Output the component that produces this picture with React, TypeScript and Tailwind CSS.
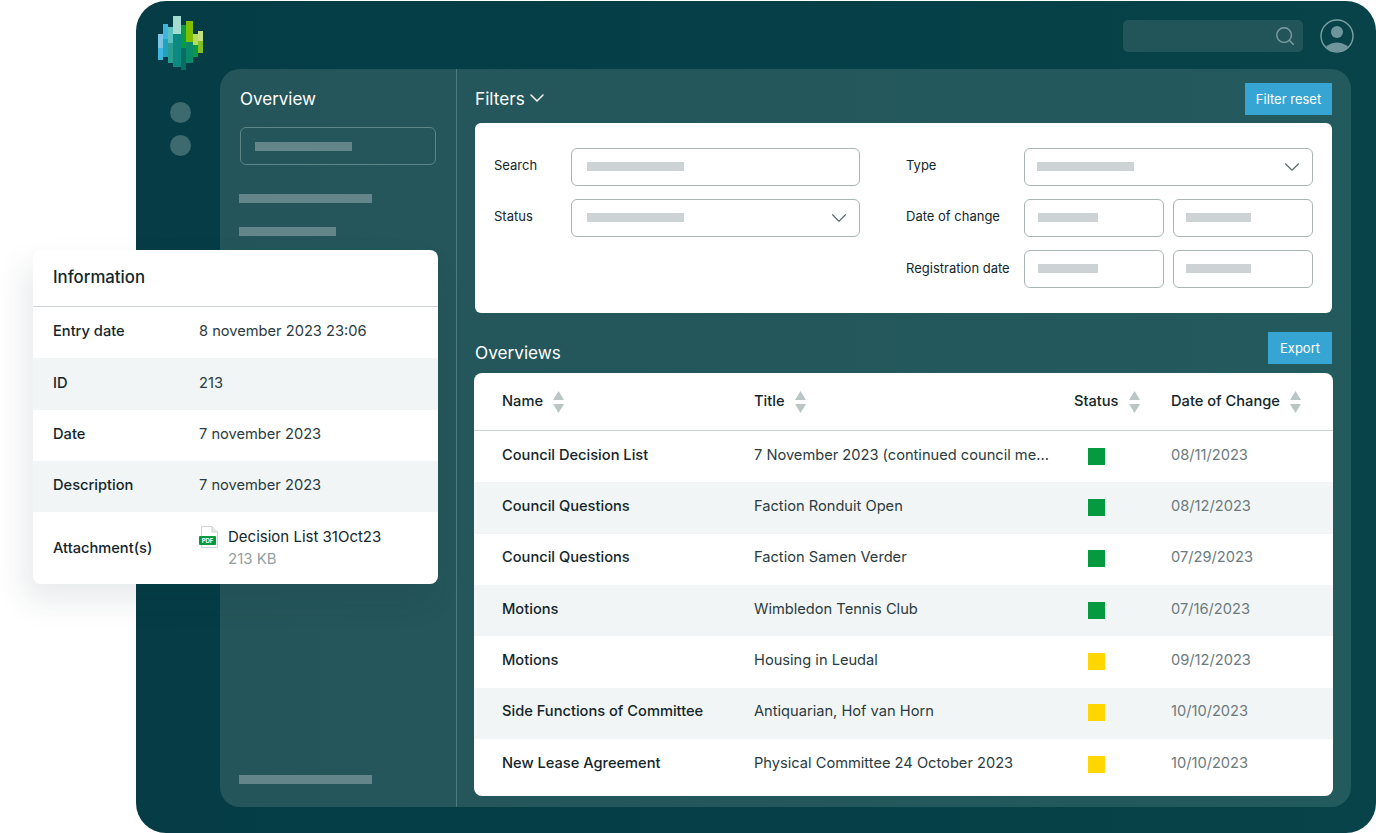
import { ChevronDown, Search } from "lucide-react";

const rows = [
  { name: "Council Decision List", title: "7 November 2023 (continued council me...", color: "bg-[#059a3f]", date: "08/11/2023" },
  { name: "Council Questions", title: "Faction Ronduit Open", color: "bg-[#059a3f]", date: "08/12/2023" },
  { name: "Council Questions", title: "Faction Samen Verder", color: "bg-[#059a3f]", date: "07/29/2023" },
  { name: "Motions", title: "Wimbledon Tennis Club", color: "bg-[#059a3f]", date: "07/16/2023" },
  { name: "Motions", title: "Housing in Leudal", color: "bg-[#ffd600]", date: "09/12/2023" },
  { name: "Side Functions of Committee", title: "Antiquarian, Hof van Horn", color: "bg-[#ffd600]", date: "10/10/2023" },
  { name: "New Lease Agreement", title: "Physical Committee 24 October 2023", color: "bg-[#ffd600]", date: "10/10/2023" },
];

const info = [
  { label: "Entry date", value: "8 november 2023 23:06" },
  { label: "ID", value: "213" },
  { label: "Date", value: "7 november 2023" },
  { label: "Description", value: "7 november 2023" },
];

const logoBars = [
  { x: 158, w: 5, y: 34, split: 48, h: 26, top: "#7cc4e2", bottom: "#3fb4dc" },
  { x: 163, w: 5, y: 24, split: 39, h: 33, top: "#3fb5e4", bottom: "#1fa3c0" },
  { x: 168, w: 5, y: 27, split: 43, h: 36, top: "#5cc0bb", bottom: "#2a9c90" },
  { x: 173, w: 8, y: 16, split: 34, h: 51, top: "#a5dcd2", bottom: "#0a8a80" },
  { x: 181, w: 5, y: 25, split: 48, h: 45, top: "#0a9a45", bottom: "#066e62" },
  { x: 186, w: 7, y: 21, split: 42, h: 42, top: "#80bf00", bottom: "#0a8a68" },
  { x: 193, w: 5, y: 34, split: 45, h: 23, top: "#b5dc60", bottom: "#0a9a45" },
  { x: 198, w: 5, y: 31, split: 41, h: 22, top: "#c5e080", bottom: "#80c020" },
];

function Logo() {
  return (
    <svg width="46" height="54" viewBox="158 16 46 54">
      {logoBars.map((b) => (
        <g key={b.x}>
          <rect x={b.x} y={b.y} width={b.w} height={b.split - b.y} fill={b.top} />
          <rect x={b.x} y={b.split} width={b.w} height={b.y + b.h - b.split} fill={b.bottom} />
        </g>
      ))}
    </svg>
  );
}

function SortArrows() {
  return (
    <svg width="11" height="22" viewBox="0 0 11 22" className="shrink-0">
      <path d="M5.5 0 L11 9 L0 9 Z" fill="#bcc5c6" />
      <path d="M0 13 L11 13 L5.5 22 Z" fill="#bcc5c6" />
    </svg>
  );
}

function Field({ bar, select, className }: { bar: string; select?: boolean; className?: string }) {
  return (
    <div className={`flex h-[38px] items-center justify-between rounded-[6px] border border-[#a9b4b5] bg-white pb-px pr-[7px] ${className ?? "pl-[15px]"}`}>
      <div className={`h-[9px] bg-[#cdd3d4] ${bar}`} />
      {select && <ChevronDown size={26} strokeWidth={1} className="text-[#5a686c]" />}
    </div>
  );
}

function PdfIcon() {
  return (
    <div className="relative h-[22px] w-[19px] shrink-0">
      <svg width="17" height="22" viewBox="0 0 17 22" className="ml-[2px]">
        <path d="M0.5 0.5 H11 L16.5 6 V21.5 H0.5 Z" fill="#fff" stroke="#cfd4d5" />
        <path d="M11 0.5 V6 H16.5" fill="#e6e9ea" stroke="#cfd4d5" />
      </svg>
      <span className="absolute left-0 top-[10px] flex h-[9px] w-[17px] items-center justify-center rounded-[1px] bg-[#059a3f] text-[6px] font-bold leading-none text-white">
        PDF
      </span>
    </div>
  );
}

export default function App() {
  return (
    <div className="relative h-[833px] w-[1376px] overflow-hidden bg-white pl-[136px] pt-px font-['Inter',sans-serif]">
      <div className="h-[832px] w-[1240px] rounded-[30px] bg-gradient-to-r from-[#053c45] via-[#063f47] to-[#074349] pr-[22px]">
        <div className="flex h-[68px] items-start justify-between">
          <div className="ml-[22px] mt-[15px]">
            <Logo />
          </div>
          <div className="mt-[18px] flex items-center gap-[18px]">
            <div className="flex h-[32px] w-[180px] items-center justify-end rounded-[5px] bg-[#22555a] pr-[7px]">
              <Search size={22} strokeWidth={1.5} className="text-[#7fa0a3]" />
            </div>
            <svg width="34" height="34" viewBox="0 0 34 34" className="-ml-px">
              <defs>
                <clipPath id="avatar">
                  <circle cx="17" cy="17" r="15.5" />
                </clipPath>
              </defs>
              <circle cx="17" cy="17" r="16" fill="none" stroke="#7fa0a3" strokeWidth="1.4" />
              <circle cx="17" cy="13" r="6" fill="#6f959c" />
              <ellipse cx="17" cy="33" rx="13" ry="9.5" fill="#6f959c" clipPath="url(#avatar)" />
            </svg>
          </div>
        </div>

        <div className="flex">
          <div className="flex w-[84px] flex-col items-center gap-[12px] pt-[33px]">
            <div className="ml-[5px] h-[21px] w-[21px] rounded-full bg-[#3c6a6e]" />
            <div className="ml-[5px] h-[21px] w-[21px] rounded-full bg-[#3c6a6e]" />
          </div>

          <div className="flex h-[738px] w-[1131px] rounded-[20px] bg-gradient-to-r from-[#24555a] to-[#235a5d]">
            <aside className="flex w-[237px] flex-col border-r border-[#4c7b7d] pl-[19px]">
              <h2 className="ml-px mt-[18px] pt-px text-[17px] leading-[23px] text-white">Overview</h2>
              <div className="ml-px mt-[16px] flex h-[38px] w-[196px] items-center rounded-[6px] border border-[#5d8688] pl-[14px]">
                <div className="h-[9px] w-[97px] bg-[#648589]" />
              </div>
              <div className="mt-[29px] h-[9px] w-[133px] bg-[#648589]" />
              <div className="mt-[24px] h-[9px] w-[97px] bg-[#648589]" />
              <div className="mb-[23px] mt-auto h-[9px] w-[133px] bg-[#648589]" />
            </aside>

            <main className="flex-1 pl-[18px] pr-[19px]">
              <div className="flex h-[54px] items-start justify-between pt-[14px]">
                <div className="flex items-center pt-[3px] text-[17.2px] leading-[23px] text-white">
                  Filters
                  <ChevronDown size={24} strokeWidth={1.5} />
                </div>
                <button className="h-[32px] w-[87px] bg-[#37a5d3] pt-px text-[13px] text-white">Filter reset</button>
              </div>

              <section className="grid h-[190px] grid-cols-[366px_407px] justify-between rounded-[6px] bg-white pl-[19px] pr-[19px] pt-[25px] text-[13px] text-[#13262b]">
                <div className="flex flex-col gap-[13px]">
                  <div className="grid grid-cols-[77px_1fr] items-center">
                    <span className="pb-[2px]">Search</span>
                    <Field bar="w-[97px]" />
                  </div>
                  <div className="grid grid-cols-[77px_1fr] items-center">
                    <span className="pb-[2px]">Status</span>
                    <Field bar="w-[97px]" select />
                  </div>
                </div>
                <div className="flex flex-col gap-[13px]">
                  <div className="grid grid-cols-[118px_1fr] items-center">
                    <span className="pb-[2px]">Type</span>
                    <Field bar="w-[97px]" select className="pl-[12px]" />
                  </div>
                  <div className="grid grid-cols-[109px_140px_140px] items-center gap-x-[9px]">
                    <span className="whitespace-nowrap pb-[2px]">Date of change</span>
                    <Field bar="w-[60px]" className="pl-[13px]" />
                    <Field bar="w-[65px]" className="pl-[12px]" />
                  </div>
                  <div className="grid grid-cols-[109px_140px_140px] items-center gap-x-[9px]">
                    <span className="whitespace-nowrap">Registration date</span>
                    <Field bar="w-[60px]" className="pl-[13px]" />
                    <Field bar="w-[65px]" className="pl-[12px]" />
                  </div>
                </div>
              </section>

              <div className="flex h-[60px] items-start justify-between pt-[19px]">
                <h2 className="pt-[9px] text-[17.2px] leading-[24px] text-white">Overviews</h2>
                <button className="h-[32px] w-[64px] bg-[#37a5d3] pt-px text-[13px] text-white">Export</button>
              </div>

              <section className="-mx-px h-[423px] overflow-hidden rounded-[8px] bg-white pb-[6px] text-[14.65px]">
                <div className="grid h-[58px] grid-cols-[252px_320px_97px_1fr] items-center border-b border-[#cdd3d4] pl-[28px] font-[450] text-[#13262b]">
                  {["Name", "Title", "Status", "Date of Change"].map((head) => (
                    <div key={head} className="flex items-center gap-[10px]">
                      {head}
                      <SortArrows />
                    </div>
                  ))}
                </div>
                {rows.map((row, index) => (
                  <div
                    key={index}
                    className={`grid h-[51.33px] grid-cols-[252px_320px_97px_1fr] items-center pb-[2px] pl-[28px] ${index % 2 === 1 ? "bg-[#f1f5f5]" : ""}`}
                  >
                    <span className="font-[450] text-[#13262b]">{row.name}</span>
                    <span className="text-[#2b3b40]">{row.title}</span>
                    <span className={`ml-[14px] mt-px h-[17px] w-[17px] ${row.color}`} />
                    <span className="text-[#6c7a7e]">{row.date}</span>
                  </div>
                ))}
              </section>
            </main>
          </div>
        </div>
      </div>

      <div className="absolute left-[33px] top-[250px] h-[334px] w-[405px] overflow-hidden rounded-[8px] bg-white text-[14.65px] text-[#13262b] shadow-[-8px_16px_32px_rgba(20,50,55,0.1)]">
        <div className="flex h-[57px] items-center border-b border-[#cdd3d4] pl-[20px] text-[16.8px] font-[450]">Information</div>
        {info.map((item, index) => (
          <div
            key={item.label}
            className={`grid h-[51.33px] grid-cols-[146px_1fr] items-center pb-px pl-[20px] ${index % 2 === 1 ? "bg-[#f1f5f5]" : ""}`}
          >
            <span className="font-[450]">{item.label}</span>
            <span className="text-[#2b3b40]">{item.value}</span>
          </div>
        ))}
        <div className="grid h-[72px] grid-cols-[146px_1fr] items-center pl-[20px]">
          <span className="pt-px font-[450]">Attachment(s)</span>
          <div className="flex gap-[10px]">
            <PdfIcon />
            <div>
              <div className="text-[15px] leading-[22px] text-[#13262b]">Decision List 31Oct23</div>
              <div className="text-[15px] leading-[22px] text-[#949fa2]">213 KB</div>
            </div>
          </div>
        </div>
      </div>
    </div>
  );
}
